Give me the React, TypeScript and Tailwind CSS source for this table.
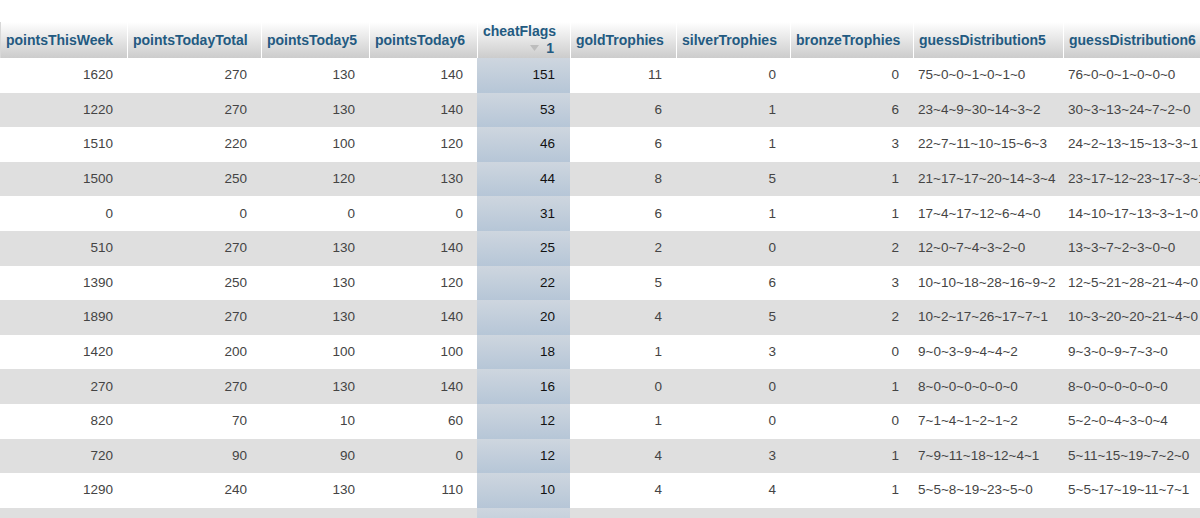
const columns = [
  { name: "pointsThisWeek", width: 127 },
  { name: "pointsTodayTotal", width: 134 },
  { name: "pointsToday5", width: 108 },
  { name: "pointsToday6", width: 108 },
  { name: "cheatFlags", width: 93 },
  { name: "goldTrophies", width: 106 },
  { name: "silverTrophies", width: 114 },
  { name: "bronzeTrophies", width: 123 },
  { name: "guessDistribution5", width: 150 },
  { name: "guessDistribution6", width: 160 },
];

type Cell = number | string;

const rows: Cell[][] = [
  [1620, 270, 130, 140, 151, 11, 0, 0, "75~0~0~1~0~1~0", "76~0~0~1~0~0~0"],
  [1220, 270, 130, 140, 53, 6, 1, 6, "23~4~9~30~14~3~2", "30~3~13~24~7~2~0"],
  [1510, 220, 100, 120, 46, 6, 1, 3, "22~7~11~10~15~6~3", "24~2~13~15~13~3~1"],
  [1500, 250, 120, 130, 44, 8, 5, 1, "21~17~17~20~14~3~4", "23~17~12~23~17~3~1"],
  [0, 0, 0, 0, 31, 6, 1, 1, "17~4~17~12~6~4~0", "14~10~17~13~3~1~0"],
  [510, 270, 130, 140, 25, 2, 0, 2, "12~0~7~4~3~2~0", "13~3~7~2~3~0~0"],
  [1390, 250, 130, 120, 22, 5, 6, 3, "10~10~18~28~16~9~2", "12~5~21~28~21~4~0"],
  [1890, 270, 130, 140, 20, 4, 5, 2, "10~2~17~26~17~7~1", "10~3~20~20~21~4~0"],
  [1420, 200, 100, 100, 18, 1, 3, 0, "9~0~3~9~4~4~2", "9~3~0~9~7~3~0"],
  [270, 270, 130, 140, 16, 0, 0, 1, "8~0~0~0~0~0~0", "8~0~0~0~0~0~0"],
  [820, 70, 10, 60, 12, 1, 0, 0, "7~1~4~1~2~1~2", "5~2~0~4~3~0~4"],
  [720, 90, 90, 0, 12, 4, 3, 1, "7~9~11~18~12~4~1", "5~11~15~19~7~2~0"],
  [1290, 240, 130, 110, 10, 4, 4, 1, "5~5~8~19~23~5~0", "5~5~17~19~11~7~1"],
  // next row is only a sliver at the bottom edge
  ["", "", "", "", "", "", "", "", "", ""],
];

function SortArrow() {
  return (
    <svg width="9" height="6" viewBox="0 0 9 6" className="inline-block mr-[7px] mb-[2px]">
      <path d="M0 0 L9 0 L4.5 6 Z" fill="#bdbdbd" />
    </svg>
  );
}

export default function App() {
  return (
    <div className="w-[1200px] h-[518px] overflow-hidden bg-white pt-[22px] font-['Liberation_Sans',Arial,sans-serif]">
      <table className="table-fixed border-separate border-spacing-0 w-[1223px]">
        <colgroup>
          {columns.map((c) => (
            <col key={c.name} style={{ width: c.width }} />
          ))}
        </colgroup>
        <thead>
          <tr>
            {columns.map((c, i) => (
              <th
                key={c.name}
                className={`h-[36px] p-0 pl-[5px] pr-[14px] text-left align-middle text-[14px] font-bold text-[#235a81] bg-linear-to-b from-white to-[#cccccc] whitespace-nowrap ${
                  i === 0 ? "border-l border-[#d8d8d8]" : "border-l border-white"
                }`}
              >
                {c.name === "cheatFlags" ? (
                  <div className="flex flex-col pr-[2px] leading-[17px]">
                    <span>cheatFlags</span>
                    <span className="self-end flex items-center">
                      <SortArrow />1
                    </span>
                  </div>
                ) : (
                  c.name
                )}
              </th>
            ))}
          </tr>
        </thead>
        <tbody>
          {rows.map((row, r) => (
            <tr key={r} className={r % 2 === 0 ? "bg-white" : "bg-[#dfdfdf]"}>
              {row.map((v, i) => {
                if (i === 4) {
                  return (
                    <td
                      key={i}
                      className="h-[34.6px] p-0 pr-[15px] text-right text-[13.5px] text-[#111] bg-linear-to-b from-[#ced6df] to-[#b6c6d7]"
                    >
                      {v}
                    </td>
                  );
                }
                return (
                  <td
                    key={i}
                    className={`h-[34.6px] p-0 text-[13.5px] text-[#444] whitespace-nowrap overflow-hidden ${
                      i >= 8 ? "text-left pl-[5px]" : "text-right pr-[14px]"
                    }`}
                  >
                    {v}
                  </td>
                );
              })}
            </tr>
          ))}
        </tbody>
      </table>
    </div>
  );
}
